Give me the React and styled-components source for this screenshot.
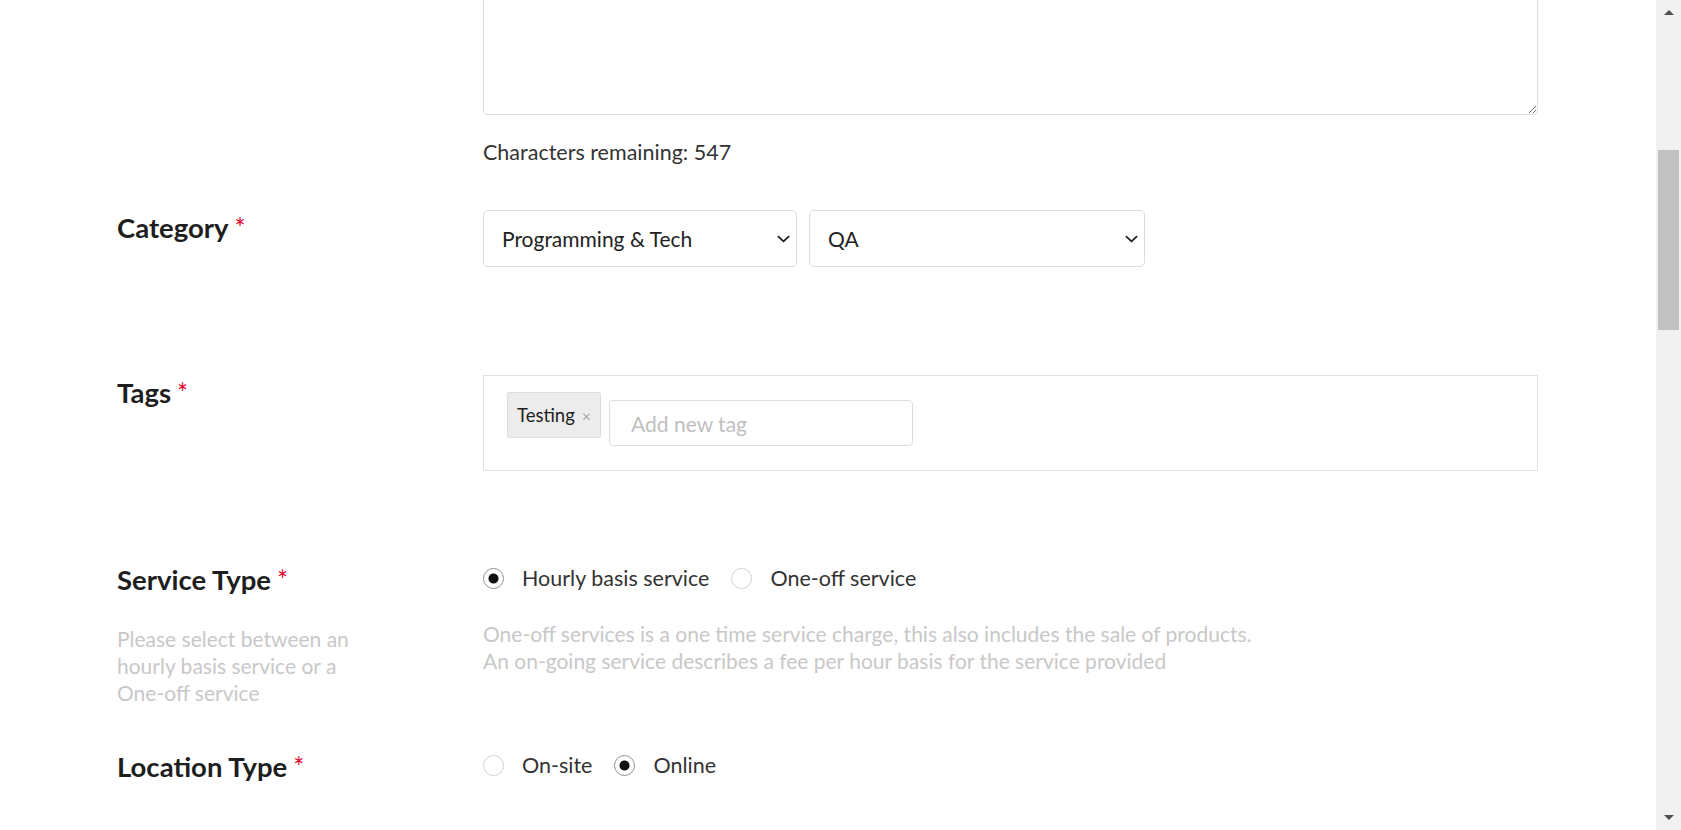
import { useLayoutEffect, useRef } from "react";
import styled, { createGlobalStyle } from "styled-components";

const GlobalStyle = createGlobalStyle`
  html, body {
    margin: 0;
    background: #fff;
    overflow: hidden;
  }
  body {
    font-family: Lato, "Noto Sans", sans-serif;
    color: #222;
  }
`;

export default function App() {
  const mainRef = useRef(null);
  const areaRef = useRef(null);

  // the reference is scrolled so the description box ends near the top
  useLayoutEffect(() => {
    const main = mainRef.current;
    const box = areaRef.current.getBoundingClientRect();
    main.scrollTop = main.scrollTop + box.bottom - 115;
  }, []);

  return (
    <>
      <GlobalStyle />
      <Shell>
        <Main ref={mainRef}>
          <Page>
            <Row $after={44}>
              <LabelCol />
              <FieldCol>
                <TextArea ref={areaRef} aria-label="Description" />
                <Counter>Characters remaining: 547</Counter>
              </FieldCol>
            </Row>

            <Row $after={108}>
              <LabelCol>
                <Label>
                  Category<Req>*</Req>
                </Label>
              </LabelCol>
              <SelectRow>
                <SelectWrap $width={314}>
                  <Select defaultValue="prog">
                    <option value="prog">Programming &amp; Tech</option>
                  </Select>
                  <Chevron />
                </SelectWrap>
                <SelectWrap $width={336}>
                  <Select defaultValue="qa">
                    <option value="qa">QA</option>
                  </Select>
                  <Chevron />
                </SelectWrap>
              </SelectRow>
            </Row>

            <Row $after={91}>
              <LabelCol>
                <Label>
                  Tags<Req>*</Req>
                </Label>
              </LabelCol>
              <FieldCol>
                <TagBox>
                  <Tag>
                    Testing<TagClose>×</TagClose>
                  </Tag>
                  <TagInput placeholder="Add new tag" />
                </TagBox>
              </FieldCol>
            </Row>

            <Row $after={43}>
              <LabelCol>
                <Label>
                  Service Type<Req>*</Req>
                </Label>
                <Help>
                  Please select between an hourly basis service or a One-off
                  service
                </Help>
              </LabelCol>
              <FieldCol>
                <RadioGroup>
                  <RadioOption>
                    <Radio type="radio" name="service" defaultChecked />
                    Hourly basis service
                  </RadioOption>
                  <RadioOption>
                    <Radio type="radio" name="service" />
                    One-off service
                  </RadioOption>
                </RadioGroup>
                <Note>
                  One-off services is a one time service charge, this also
                  includes the sale of products.
                  <br />
                  An on-going service describes a fee per hour basis for the
                  service provided
                </Note>
              </FieldCol>
            </Row>

            <Row $after={80}>
              <LabelCol>
                <Label>
                  Location Type<Req>*</Req>
                </Label>
              </LabelCol>
              <FieldCol>
                <RadioGroup>
                  <RadioOption>
                    <Radio type="radio" name="location" />
                    On-site
                  </RadioOption>
                  <RadioOption>
                    <Radio type="radio" name="location" defaultChecked />
                    Online
                  </RadioOption>
                </RadioGroup>
              </FieldCol>
            </Row>
          </Page>
        </Main>

        <Rail>
          <RailButton>
            <ArrowUp />
          </RailButton>
          <Track>
            <Thumb />
          </Track>
          <RailButton>
            <ArrowDown />
          </RailButton>
        </Rail>
      </Shell>
    </>
  );
}

function Chevron() {
  return (
    <ChevronIcon viewBox="0 0 14 8" width="13" height="8">
      <path
        d="M1.5 1.5 L7 6.5 L12.5 1.5"
        fill="none"
        stroke="#222"
        strokeWidth="2"
        strokeLinecap="round"
        strokeLinejoin="round"
      />
    </ChevronIcon>
  );
}

const Shell = styled.div`
  display: flex;
  height: 100vh;
`;

const Main = styled.main`
  flex: 1;
  min-width: 0;
  overflow-y: auto;
  scrollbar-width: none;
  &::-webkit-scrollbar {
    display: none;
  }
`;

const Rail = styled.div`
  display: flex;
  flex-direction: column;
  width: 25px;
  flex-shrink: 0;
  background: #f1f1f1;
`;

const RailButton = styled.div`
  display: flex;
  align-items: center;
  justify-content: center;
  height: 25px;
`;

const ArrowUp = styled.span`
  width: 0;
  height: 0;
  border-left: 5px solid transparent;
  border-right: 5px solid transparent;
  border-bottom: 5px solid #505050;
`;

const ArrowDown = styled.span`
  width: 0;
  height: 0;
  border-left: 5px solid transparent;
  border-right: 5px solid transparent;
  border-top: 5px solid #505050;
`;

const Track = styled.div`
  flex: 1;
`;

const Thumb = styled.div`
  height: 180px;
  margin: 125px 2px 0;
  background: #c1c1c1;
`;

const Page = styled.div`
  box-sizing: border-box;
  min-height: 3597px;
  padding: 391px 118px 0 117px;
`;

const Row = styled.div`
  display: grid;
  grid-template-columns: 366px 1fr;
  margin-bottom: ${(p) => p.$after}px;
`;

const LabelCol = styled.div`
  display: flex;
  flex-direction: column;
`;

const FieldCol = styled.div`
  display: flex;
  flex-direction: column;
  align-items: stretch;
`;

const Label = styled.div`
  font-size: 27.5px;
  line-height: 36px;
  font-weight: 700;
  color: #1e1e1e;
`;

const Req = styled.span`
  color: #e4002b;
  font-size: 26px;
  font-weight: 400;
  margin-left: 6px;
`;

const Help = styled.p`
  margin: 27px 0 0;
  max-width: 262px;
  font-size: 21px;
  line-height: 27px;
  color: #c8c8c8;
`;

const TextArea = styled.textarea`
  box-sizing: border-box;
  display: block;
  height: 300px;
  padding: 14px 19px;
  border: 1px solid #ddd;
  border-radius: 5px;
  font: 400 21px Lato, sans-serif;
  color: #222;
`;

const Counter = styled.div`
  margin-top: 23px;
  font-size: 21.5px;
  line-height: 28px;
  color: #333;
`;

const SelectRow = styled.div`
  display: flex;
  gap: 12px;
`;

const SelectWrap = styled.div`
  position: relative;
  width: ${(p) => p.$width}px;
`;

const Select = styled.select`
  appearance: none;
  box-sizing: border-box;
  width: 100%;
  height: 57px;
  padding: 0 40px 0 18px;
  border: 1px solid #ddd;
  border-radius: 5px;
  background: #fff;
  font: 400 21px Lato, sans-serif;
  color: #222;
`;

const ChevronIcon = styled.svg`
  position: absolute;
  right: 7px;
  top: 25px;
  pointer-events: none;
`;

const TagBox = styled.div`
  box-sizing: border-box;
  display: flex;
  align-items: flex-start;
  gap: 8px;
  height: 96px;
  padding: 16px 23px 0;
  border: 1px solid #e0e0e0;
`;

const Tag = styled.span`
  box-sizing: border-box;
  display: inline-flex;
  align-items: center;
  height: 46px;
  padding: 0 9px;
  background: #ececec;
  border: 1px solid #dcdcdc;
  border-radius: 2px;
  font-size: 18.5px;
  color: #222;
`;

const TagClose = styled.span`
  margin-left: 7px;
  font-size: 16px;
  color: #a8a8a8;
`;

const TagInput = styled.input`
  box-sizing: border-box;
  width: 304px;
  height: 46px;
  margin-top: 8px;
  padding: 0 21px;
  border: 1px solid #ddd;
  border-radius: 4px;
  font: 400 21px Lato, sans-serif;
  color: #222;
  &::placeholder {
    color: #bfbfbf;
  }
`;

const RadioGroup = styled.div`
  display: flex;
  align-items: center;
  gap: 22px;
  height: 32px;
`;

const RadioOption = styled.label`
  display: flex;
  align-items: center;
  gap: 18px;
  font-size: 21.5px;
  color: #333;
`;

const Radio = styled.input`
  appearance: none;
  box-sizing: border-box;
  width: 21px;
  height: 21px;
  margin: 0;
  border: 1px solid #cfcfcf;
  border-radius: 50%;
  background: #fff;
  &:checked {
    border-color: #8f8f8f;
    background: radial-gradient(circle, #111 0 4.5px, #fff 5.5px);
  }
`;

const Note = styled.p`
  margin: 26px 0 0;
  font-size: 21px;
  line-height: 27px;
  color: #c8c8c8;
`;
